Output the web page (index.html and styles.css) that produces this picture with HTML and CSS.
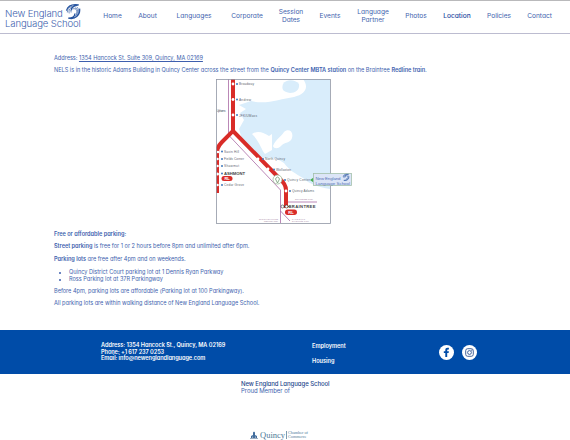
FILE: index.html
```html
<!DOCTYPE html>
<html lang="en">
<head>
<meta charset="utf-8">
<title>Location – New England Language School</title>
<link rel="stylesheet" href="styles.css">
</head>
<body>
<svg class="symbols" aria-hidden="true">
  <symbol id="swirl" viewBox="0 0 16 17">
    <g fill="none" stroke="#26549f">
      <path d="M1 7C3 1 8 0 14 1C9 2 6 3 6 7" stroke-width="1.3"/>
      <path d="M2 9C2 4 6 2 11 2M4 10C3 6 5 4 9 3M6 9C5 6 7 5 9 5C12 5 13 8 11 11" stroke-width=".7"/>
      <path d="M10 4C14 5 14 10 10 13M12 3C16 7 14 12 9 15" stroke-width=".7"/>
      <path d="M15 5C16 12 10 17 3 15C8 15 10 13 10 10" stroke-width="1.3"/>
    </g>
  </symbol>
</svg>
<header class="header">
  <a class="logo"><span class="l1">New England</span><span class="l2">Language School</span><svg class="logo-mark"><use href="#swirl"/></svg></a>
  <nav class="nav">
    <a class="w19">Home</a><a class="w19">About</a><a class="w42">Languages</a><a class="w32">Corporate</a><a class="w24">Session<br>Dates</a><a class="w22">Events</a><a class="w32">Language<br>Partner</a><a class="w22">Photos</a><a class="w28 active">Location</a><a class="w24">Policies</a><a class="w25">Contact</a>
  </nav>
</header>
<main class="content">
  <p class="address">Address: <u>1354 Hancock St. Suite 309, Quincy, MA 02169</u></p>
  <p class="intro">NELS is in the historic Adams Building in Quincy Center across the street from the <b>Quincy Center MBTA station</b> on the Braintree <b>Redline train.</b></p>
  <svg class="map" viewBox="216 79 136 145" role="img" aria-label="Red Line map">
    <rect x="216.5" y="79.5" width="114" height="144" fill="#fff"/>
    <path d="M303 79H330V189C318 187 309 184 303 178C296 174 289 170 284 163C278 159 273 157 268 158C261 157 258 159 255 156C251 153 248 150 243 143L239 129L244 120L240 113L246 109L239 105L251 101C266 105 280 99 294 97C306 94 309 87 303 79Z" fill="#d9edfb"/>
    <path d="M283 84C286 79 295 79 299 84C300 90 295 93 290 93C284 92 281 90 283 84Z" fill="#d9edfb"/>
    <path d="M252 134C258 130 264 133 269 136L272 134V150L265 154C261 149 260 142 252 134ZM273 146C276 139 281 137 284 132C288 128 294 131 292 138C291 143 284 142 281 146C278 149 274 149 273 146ZM244 146C249 151 249 157 253 160L246 159Z" fill="#fff"/>
    <path d="M228.5 79V135L280.5 190V223M280.5 211L290 221M287 202H317" fill="none" stroke="#a96aa5" stroke-width=".8"/>
    <path d="M233 79V131L222 142C217 147 217 150 217 156V193M233 131L279 178Q286 184 286 190V208" fill="none" stroke="#d92c28" stroke-width="4"/>
    <g fill="#fff">
      <circle cx="233" cy="84" r="1.4"/><circle cx="233" cy="99.5" r="1.4"/><circle cx="233" cy="115" r="1.4"/><circle cx="218" cy="152" r="1.3"/><circle cx="217.500" cy="159" r="1.3"/><circle cx="217.500" cy="166" r="1.3"/><circle cx="217.500" cy="174" r="1.5"/><circle cx="217.500" cy="185" r="1.3"/><circle cx="258" cy="159" r="1.4"/><circle cx="268" cy="169" r="1.4"/><circle cx="286" cy="191" r="1.4"/>
    </g>
    <g fill="#3f78bd">
      <circle cx="237" cy="84" r="1"/><circle cx="237" cy="99.500" r="1"/><circle cx="237" cy="115" r="1"/><circle cx="222" cy="151.500" r="1"/><circle cx="222" cy="159" r="1"/><circle cx="222" cy="166" r="1"/><circle cx="222" cy="173.500" r="1"/><circle cx="222" cy="185" r="1"/><circle cx="263" cy="159" r="1"/><circle cx="274" cy="169.500" r="1"/><circle cx="285" cy="180" r="1"/><circle cx="290" cy="191" r="1"/>
    </g>
    <g class="stations">
      <text x="239" y="85.300" textLength="15">Broadway</text><text x="239" y="101" textLength="12">Andrew</text><text x="239" y="116.500" textLength="18">JFK/UMass</text><text x="216.500" y="112" textLength="9">Uphams</text>
      <text x="224" y="153" textLength="15">Savin Hill</text><text x="224" y="160.300" textLength="20">Fields Corner</text><text x="224" y="167.300" textLength="15">Shawmut</text><text x="224" y="186.300" textLength="20">Cedar Grove</text>
      <text x="265" y="160.300" textLength="20">North Quincy</text><text x="276" y="170.800" textLength="15">Wollaston</text><text x="287" y="181.300" textLength="23">Quincy Center</text><text x="292" y="192.300" textLength="22">Quincy Adams</text>
      <text class="terminal" x="224" y="175" textLength="21">ASHMONT</text><text class="terminal" x="288.500" y="208" textLength="27">BRAINTREE</text>
      <g class="fine"><text x="295" y="199.500" textLength="18">Greenbush Line</text><text x="259" y="219.500" textLength="19">Middleborough</text><text x="264" y="222" textLength="14">Lakeville Line</text><text x="292" y="219.500" textLength="13">Kingston</text><text x="292" y="222" textLength="17">Plymouth Line</text></g>
    </g>
    <rect x="221.500" y="176" width="11" height="5" rx="2.500" fill="#d92c28"/><text class="badge" x="224.500" y="180">RL</text>
    <rect x="285" y="209.500" width="12" height="5.500" rx="2.700" fill="#d92c28"/><text class="badge" x="288.300" y="214">RL</text>
    <path d="M281 206.500H289" stroke="#333" stroke-width=".8"/><circle cx="282.500" cy="206.500" r="1.500" fill="#fff" stroke="#333" stroke-width=".6"/><circle cx="286.500" cy="206.500" r="1.500" fill="#fff" stroke="#333" stroke-width=".6"/>
    <circle cx="277.500" cy="179.500" r="4.500" fill="#fff" stroke="#9dbb9a" stroke-width=".8"/><path d="M275.500 179Q277.500 175 279.500 179L277.500 183Z" fill="none" stroke="#709d70" stroke-width=".8"/>
    <rect x="216.500" y="79.500" width="114" height="144" fill="none" stroke="#9197a5" stroke-width=".8"/>
    <path d="M310 180L313.500 177.500V182.500Z" fill="#48ae52"/>
    <rect x="313.500" y="173.500" width="38" height="12" fill="#dce5f7" stroke="#a4c0ab" stroke-width=".8"/>
    <text class="callout" x="315.500" y="179.700" textLength="25">New England</text><text class="callout" x="315.500" y="184.600" textLength="34.500">Language School</text><use href="#swirl" x="342.500" y="173.500" width="7" height="8"/>
  </svg>
  <p class="parking-title"><b>Free or affordable parking:</b></p>
  <p class="street"><b>Street parking</b> is free for 1 or 2 hours before 8pm and unlimited after 6pm.</p>
  <p class="lots"><b>Parking lots</b> are free after 4pm and on weekends.</p>
  <ul>
    <li class="court">Quincy District Court parking lot at 1 Dennis Ryan Parkway</li>
    <li class="ross">Ross Parking lot at 37R Parkingway</li>
  </ul>
  <p class="before">Before 4pm, parking lots are affordable (Parking lot at 100 Parkingway).</p>
  <p class="all">All parking lots are within walking distance of New England Language School.</p>
</main>
<footer>
  <div class="band">
    <address><span class="a1">Address: 1354 Hancock St., Quincy, MA 02169</span><span class="a2">Phone: +1 617 237 0253</span><span class="a3">Email: info@newenglandlanguage.com</span></address>
    <div class="links"><a>Employment</a><a>Housing</a></div>
    <div class="social">
      <svg viewBox="0 0 15 15"><circle cx="7.500" cy="7.500" r="7.500" fill="#fff"/><path d="M6.300 12V8H4.800V6.200H6.300V5C6.300 3.500 7.200 2.800 8.500 2.800H9.900V4.500H9C8.400 4.500 8.200 4.800 8.200 5.300V6.200H9.900L9.600 8H8.200V12Z" fill="#004ca8"/></svg>
      <svg viewBox="0 0 15 15"><circle cx="7.500" cy="7.500" r="7.500" fill="#fff"/><g fill="none" stroke="#315391" stroke-width=".9"><rect x="3.700" y="3.700" width="7.600" height="7.600" rx="2"/><circle cx="7.500" cy="7.500" r="1.900"/></g><circle cx="9.800" cy="5.200" r=".6" fill="#315391"/></svg>
    </div>
  </div>
  <div class="member"><b>New England Language School</b><span>Proud Member of</span></div>
  <div class="chamber">
    <svg viewBox="0 0 8 9"><path d="M1 8V5L3 4V1.500L4 .5L5 1.500V4L7 5V8Z" fill="#426e9e"/><path d="M0 7.500H8M2.500 5.500V7M5.500 5.500V7" stroke="#9caec2"/></svg>
    <span class="quincy">Quincy</span><span class="chamber-name">Chamber of<br>Commerce</span>
  </div>
</footer>
</body>
</html>
```

FILE: styles.css
```css
* { box-sizing: border-box; }
body { margin: 0; width: 570px; height: 440px; overflow: hidden; background: #fff; color: #3e5fae; font: 5.6px/7px Inter, "Liberation Sans", sans-serif; font-feature-settings: "cv11"; }
.symbols { position: absolute; width: 0; height: 0; }
.header { display: flex; height: 34px; border-top: 1px solid #b9b9bb; border-bottom: 1px solid #bcbcd0; }
.logo { position: relative; width: 103px; padding: 8px 0 0 5px; font: 300 9.6px/10px Inter, sans-serif; }
.logo span { display: block; white-space: nowrap; }
.l1, .l2 { letter-spacing: -.14px; }
.logo-mark { position: absolute; left: 65px; top: 3px; width: 16px; height: 16px; }
.nav { display: flex; align-items: center; gap: 16px; padding-bottom: 1px; font-size: 6.6px; line-height: 7.6px; }
.nav a { display: flex; flex: none; justify-content: center; text-align: center; white-space: nowrap; }
.nav .active { font-weight: 500; color: #2449a0; }
.w19 { width: 19px; } .w22 { width: 22px; } .w24 { width: 24px; } .w25 { width: 25px; } .w28 { width: 28px; } .w32 { width: 32px; } .w42 { width: 42px; }
.content { height: 296px; padding: 21px 54px 0; letter-spacing: -.015px; }
p { margin: 0 0 5px; height: 7px; white-space: nowrap; }
b { font-weight: 600; }
u { text-decoration-thickness: .5px; text-underline-offset: 1px; }
.map { display: block; width: 136px; height: 145px; margin: 0 0 7px 162px; }
.map text { font-family: "Liberation Sans", sans-serif; }
.stations { font-size: 3.2px; fill: #626773; }
.map .terminal { font-size: 4.2px; font-weight: 700; fill: #444; }
.fine { font-size: 2.2px; fill: #966e91; }
.badge { font-size: 4px; font-weight: 700; fill: #fff; }
.callout { font-size: 4.4px; fill: #5270b5; }
ul { margin: 6px 0 6px; padding-left: 15px; line-height: 6.5px; }
li { height: 6.5px; white-space: nowrap; }
.street { margin-bottom: 6px; }
.band { display: flex; height: 44px; padding: 12px 0 0 101px; background: #004ca8; color: #fff; }
address { width: 211px; font-style: normal; font-weight: 600; line-height: 6.5px; }
address span { display: block; white-space: nowrap; }
.a1 { letter-spacing: -.03px; }
.a2, .a3 { letter-spacing: -.06px; }
.links { display: flex; flex-direction: column; gap: 8px; width: 127px; padding-top: .5px; font-weight: 600; }
.social { display: flex; gap: 8px; padding-top: 3px; }
.social svg { width: 15px; height: 15px; }
.member { display: flex; flex-direction: column; height: 54px; padding: 7px 0 0 241px; font-size: 6px; line-height: 6.5px; letter-spacing: -.05px; }
.member b { font-weight: 500; color: #26488c; }
.chamber { display: flex; align-items: center; height: 14px; padding-left: 250px; color: #4b7998; }
.chamber svg { width: 8px; height: 9px; margin-right: 2px; }
.quincy { font: 8.5px/12px "Liberation Serif", serif; }
.chamber-name { margin-left: 1px; padding-left: 1px; border-left: 1px solid #7b9bb1; font: 4.2px/3.8px "Liberation Serif", serif; }
```
